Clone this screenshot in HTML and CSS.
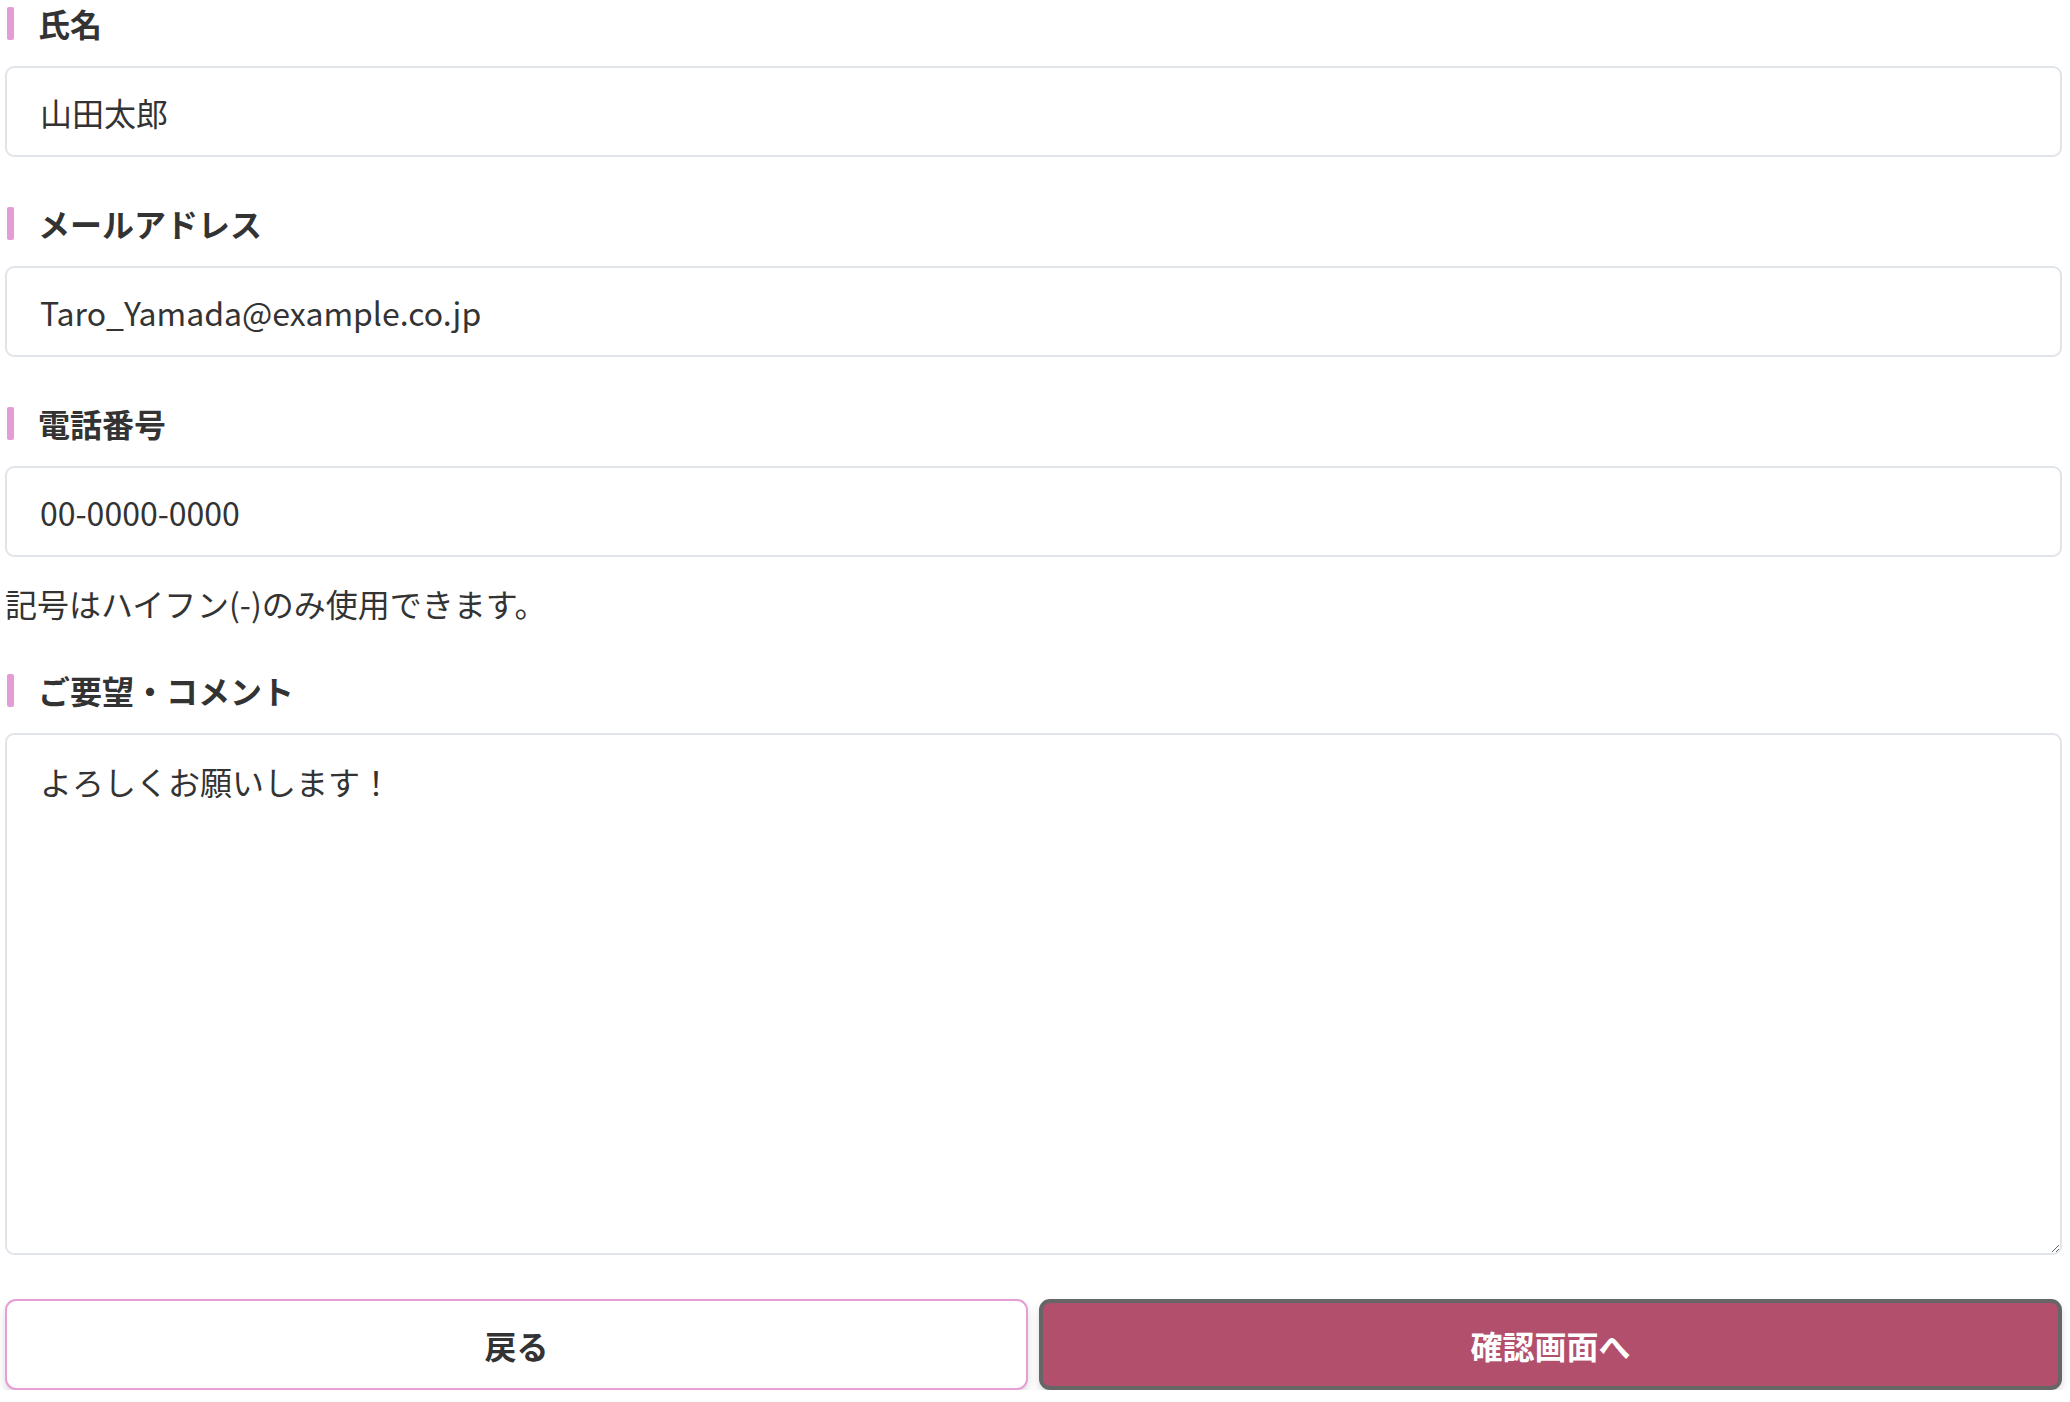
FILE: index.html
```html
<!DOCTYPE html>
<html lang="ja">
<head>
<meta charset="utf-8">
<title>お問い合わせ</title>
<link rel="stylesheet" href="styles.css">
</head>
<body>
<form class="form">
  <div class="field">
    <label class="label">氏名</label>
    <input class="input" type="text" value="山田太郎">
  </div>
  <div class="field">
    <label class="label">メールアドレス</label>
    <input class="input" type="text" value="Taro_Yamada@example.co.jp">
  </div>
  <div class="field">
    <label class="label">電話番号</label>
    <input class="input" type="text" value="00-0000-0000">
    <p class="hint">記号はハイフン(-)のみ使用できます。</p>
  </div>
  <div class="field">
    <label class="label">ご要望・コメント</label>
    <textarea class="textarea">よろしくお願いします！</textarea>
  </div>
  <div class="buttons">
    <button type="button" class="btn btn-back">戻る</button>
    <button type="button" class="btn btn-next">確認画面へ</button>
  </div>
</form>
</body>
</html>
```
FILE: styles.css
```css
html, body {
  margin: 0;
  padding: 0;
  background: #ffffff;
}
body {
  font-family: "Noto Sans CJK JP", "Noto Sans", sans-serif;
  color: #333333;
}
.form {
  margin: 0 8px 0 5px;
  padding-top: 7px;
  display: flex;
  flex-direction: column;
}
.field {
  display: flex;
  flex-direction: column;
  margin-bottom: 50px;
}
.label {
  display: flex;
  align-items: center;
  height: 33px;
  font-size: 32px;
  font-weight: 700;
  line-height: 33px;
  margin-bottom: 26px;
  padding-left: 33px;
  position: relative;
}
.label::before {
  content: "";
  position: absolute;
  left: 2px;
  top: 0;
  width: 7px;
  height: 33px;
  border-radius: 2px;
  background: #e59bd5;
}
.input,
.textarea {
  box-sizing: border-box;
  width: 100%;
  border: 2px solid #e1e5ea;
  border-radius: 9px;
  background: #ffffff;
  font-family: "Noto Sans CJK JP", "Noto Sans", sans-serif;
  font-size: 32px;
  color: #333333;
  padding: 0 33px;
  margin: 0;
  outline: none;
}
.input {
  height: 91px;
}
.textarea {
  height: 522px;
  padding-top: 22px;
  line-height: 1.5;
  resize: vertical;
  display: block;
}
.hint {
  margin: 24px 0 -1px 0;
  font-size: 32px;
  line-height: 44px;
}
.buttons {
  display: grid;
  grid-template-columns: 1fr 1fr;
  gap: 11px;
  margin-top: -6px;
}
.btn {
  box-sizing: border-box;
  height: 91px;
  font-family: "Noto Sans CJK JP", "Noto Sans", sans-serif;
  font-size: 32px;
  font-weight: 700;
  border-radius: 11px;
  box-shadow: 0 5px 9px rgba(0, 0, 0, 0.14);
  cursor: pointer;
}
.btn-back {
  background: #ffffff;
  color: #333333;
  border: 2px solid #e69fd6;
}
.btn-next {
  background: #b24f6c;
  color: #ffffff;
  border: 4px solid #666666;
}
```
